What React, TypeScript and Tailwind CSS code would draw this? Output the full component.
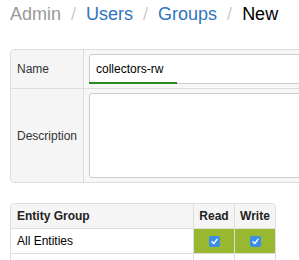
import React from 'react';

function Check() {
  return (
    <span className="inline-flex w-[11px] h-[11px] rounded-[2px] bg-[#3b8eea] items-center justify-center">
      <svg width="9" height="9" viewBox="0 0 9 9">
        <path d="M2 4.8 L3.8 6.5 L7 2.3" fill="none" stroke="#fff" strokeWidth="1.4" strokeLinecap="round" strokeLinejoin="round" />
      </svg>
    </span>
  );
}

export default function App() {
  return (
    <div className="w-[299px] h-[260px] overflow-hidden bg-white font-['Liberation_Sans',Arial,sans-serif] text-[#333]">
      <div className="flex items-center gap-[10px] pl-[10px] pt-[4px] h-[24px] text-[18px] leading-[22px]">
        <span className="text-[#999]">Admin</span>
        <span className="text-[#ccc]">/</span>
        <span className="text-[#2f74bd]">Users</span>
        <span className="text-[#ccc]">/</span>
        <span className="text-[#2f74bd]">Groups</span>
        <span className="text-[#ccc]">/</span>
        <span className="text-black">New</span>
      </div>

      <div className="ml-[10px] mt-[25px] w-[420px] border border-[#ddd] rounded-[4px] text-[12px]">
        <div className="flex h-[39px] border-b border-[#ddd]">
          <div className="w-[73px] shrink-0 bg-[#f5f5f5] border-r border-[#ddd] rounded-tl-[4px] flex items-center pl-[6px]">
            Name
          </div>
          <div className="flex-1 bg-[#f7f7f7] py-[4px] pl-[5px]">
            <div className="relative h-[30px] border border-[#ccc] rounded-[3px] bg-white flex items-center pl-[6px] text-black">
              collectors-rw
              <div className="absolute left-[-1px] bottom-[-1px] w-[88px] h-[2px] bg-[#2a8a22]" />
            </div>
          </div>
        </div>
        <div className="flex h-[93px]">
          <div className="w-[73px] shrink-0 bg-[#f5f5f5] border-r border-[#ddd] rounded-bl-[4px] flex items-center pl-[6px]">
            Description
          </div>
          <div className="flex-1 bg-[#f7f7f7] py-[4px] pl-[5px]">
            <div className="h-full border border-[#ccc] rounded-[3px] bg-white" />
          </div>
        </div>
      </div>

      <div className="ml-[10px] mt-[20px] w-[266px] border border-[#ddd] rounded-t-[4px] text-[12px]">
        <div className="flex h-[25px] bg-[#f5f5f5] font-bold text-[#222] rounded-t-[4px] border-b border-[#ddd]">
          <div className="flex-1 flex items-center pl-[6px]">Entity Group</div>
          <div className="w-[41px] border-l border-[#ddd] flex items-center justify-center">Read</div>
          <div className="w-[41px] border-l border-[#ddd] flex items-center justify-center">Write</div>
        </div>
        <div className="flex h-[25px] border-b border-[#ddd]">
          <div className="flex-1 flex items-center pl-[6px] text-black">All Entities</div>
          <div className="w-[41px] border-l border-[#ddd] bg-[#98b92f] flex items-center justify-center">
            <Check />
          </div>
          <div className="w-[41px] border-l border-[#ddd] bg-[#98b92f] flex items-center justify-center">
            <Check />
          </div>
        </div>
        <div className="flex h-[25px]">
          <div className="flex-1" />
          <div className="w-[41px] border-l border-[#ddd]" />
          <div className="w-[41px] border-l border-[#ddd]" />
        </div>
      </div>
    </div>
  );
}
